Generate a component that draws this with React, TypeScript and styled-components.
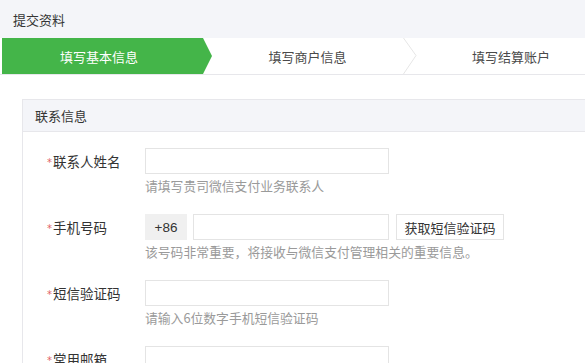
import React from "react";
import styled, { createGlobalStyle } from "styled-components";

const Global = createGlobalStyle`
  html, body { margin: 0; padding: 0; background: #fff; overflow: hidden; }
  body { font-family: "Noto Sans CJK SC", "Noto Sans", sans-serif; color: #333; }
  * { box-sizing: border-box; }
`;

const Page = styled.div`
  width: 585px;
  height: 363px;
  overflow: hidden;
  display: flex;
  flex-direction: column;
`;

const TopBar = styled.div`
  height: 38px;
  flex: 0 0 38px;
  background: #f4f5f9;
  display: flex;
  align-items: center;
  padding-left: 13px;
  font-size: 13px;
  color: #353535;
`;

const Steps = styled.div`
  height: 37px;
  flex: 0 0 37px;
  display: flex;
  padding-left: 2px;
  border-bottom: 1px solid #e7e7eb;
  background: #fff;
  white-space: nowrap;
`;

const Step = styled.div<{ $w: number; $active?: boolean; $pr?: number }>`
  flex: 0 0 ${(p) => p.$w}px;
  display: flex;
  align-items: stretch;
  padding-right: ${(p) => p.$pr ?? 0}px;
  background: ${(p) => (p.$active ? "#44b549" : "transparent")};
  clip-path: ${(p) =>
    p.$active
      ? "polygon(0 0, 201px 0, 210px 50%, 201px 100%, 0 100%)"
      : "none"};
  color: ${(p) => (p.$active ? "#fff" : "#4a4a4a")};
  font-size: 13px;
`;

const StepLabel = styled.div`
  flex: 1;
  display: flex;
  align-items: center;
  justify-content: center;
`;

const Chevron = styled.svg`
  flex: 0 0 14px;
  width: 14px;
  height: 36px;
`;

const Content = styled.div`
  flex: 1;
  padding: 24px 0 0 22px;
`;

const Panel = styled.div`
  width: 600px;
  border: 1px solid #e7e7eb;
  border-right: none;
  height: 400px;
`;

const PanelHead = styled.div`
  height: 32px;
  background: #f4f5f9;
  border-bottom: 1px solid #e7e7eb;
  display: flex;
  align-items: center;
  padding-left: 12px;
  font-size: 13px;
  color: #353535;
`;

const PanelBody = styled.div`
  padding: 16px 0 0 24px;
  display: flex;
  flex-direction: column;
  gap: 18px;
`;

const Row = styled.div`
  display: grid;
  grid-template-columns: 98px auto;
`;

const Label = styled.div`
  height: 26px;
  line-height: 26px;
  font-size: 13.5px;
  color: #333;
  display: flex;
  align-items: center;
`;

const Star = styled.span`
  color: #e15f63;
  font-family: "DejaVu Sans", sans-serif;
  font-size: 10px;
  margin-right: 1px;
  position: relative;
  top: 2px;
`;

const Field = styled.div`
  display: flex;
  flex-direction: column;
`;

const Controls = styled.div`
  display: flex;
  gap: 6px;
  align-items: center;
`;

const Input = styled.div<{ $w: number }>`
  width: ${(p) => p.$w}px;
  height: 26px;
  border: 1px solid #e4e4e4;
  background: #fff;
`;

const Prefix = styled.div`
  width: 42px;
  height: 26px;
  background: #f0f0f0;
  display: flex;
  align-items: center;
  justify-content: center;
  font-family: "Liberation Sans", Arial, sans-serif;
  font-size: 13.5px;
  color: #333;
`;

const Button = styled.div`
  margin-left: 1px;
  width: 108px;
  height: 26px;
  border: 1px solid #e4e4e4;
  background: #fff;
  display: flex;
  align-items: center;
  justify-content: center;
  font-size: 13px;
  color: #333;
`;

const Hint = styled.div`
  margin-top: 2px;
  height: 20px;
  line-height: 20px;
  font-size: 12.8px;
  color: #9a9a9a;
  white-space: nowrap;
`;

const rows = [
  { label: "联系人姓名", hint: "请填写贵司微信支付业务联系人", phone: false },
  {
    label: "手机号码",
    hint: "该号码非常重要，将接收与微信支付管理相关的重要信息。",
    phone: true,
  },
  { label: "短信验证码", hint: "请输入6位数字手机短信验证码", phone: false },
  { label: "常用邮箱", hint: "", phone: false },
];

export default function App() {
  return (
    <Page>
      <Global />
      <TopBar>提交资料</TopBar>
      <Steps>
        <Step $w={210} $pr={16} $active>
          <StepLabel>填写基本信息</StepLabel>
        </Step>
        <Step $w={205}>
          <StepLabel>填写商户信息</StepLabel>
          <Chevron viewBox="0 0 14 36">
            <path d="M0.5 0 L13 17.5 L0.5 36" fill="none" stroke="#e6e6e6" strokeWidth="1" />
          </Chevron>
        </Step>
        <Step $w={188}>
          <StepLabel>填写结算账户</StepLabel>
        </Step>
      </Steps>
      <Content>
        <Panel>
          <PanelHead>联系信息</PanelHead>
          <PanelBody>
            {rows.map((r) => (
              <Row key={r.label}>
                <Label>
                  <Star>*</Star>
                  {r.label}
                </Label>
                <Field>
                  {r.phone ? (
                    <Controls>
                      <Prefix>+86</Prefix>
                      <Input $w={196} />
                      <Button>获取短信验证码</Button>
                    </Controls>
                  ) : (
                    <Controls>
                      <Input $w={244} />
                    </Controls>
                  )}
                  {r.hint && <Hint>{r.hint}</Hint>}
                </Field>
              </Row>
            ))}
          </PanelBody>
        </Panel>
      </Content>
    </Page>
  );
}
